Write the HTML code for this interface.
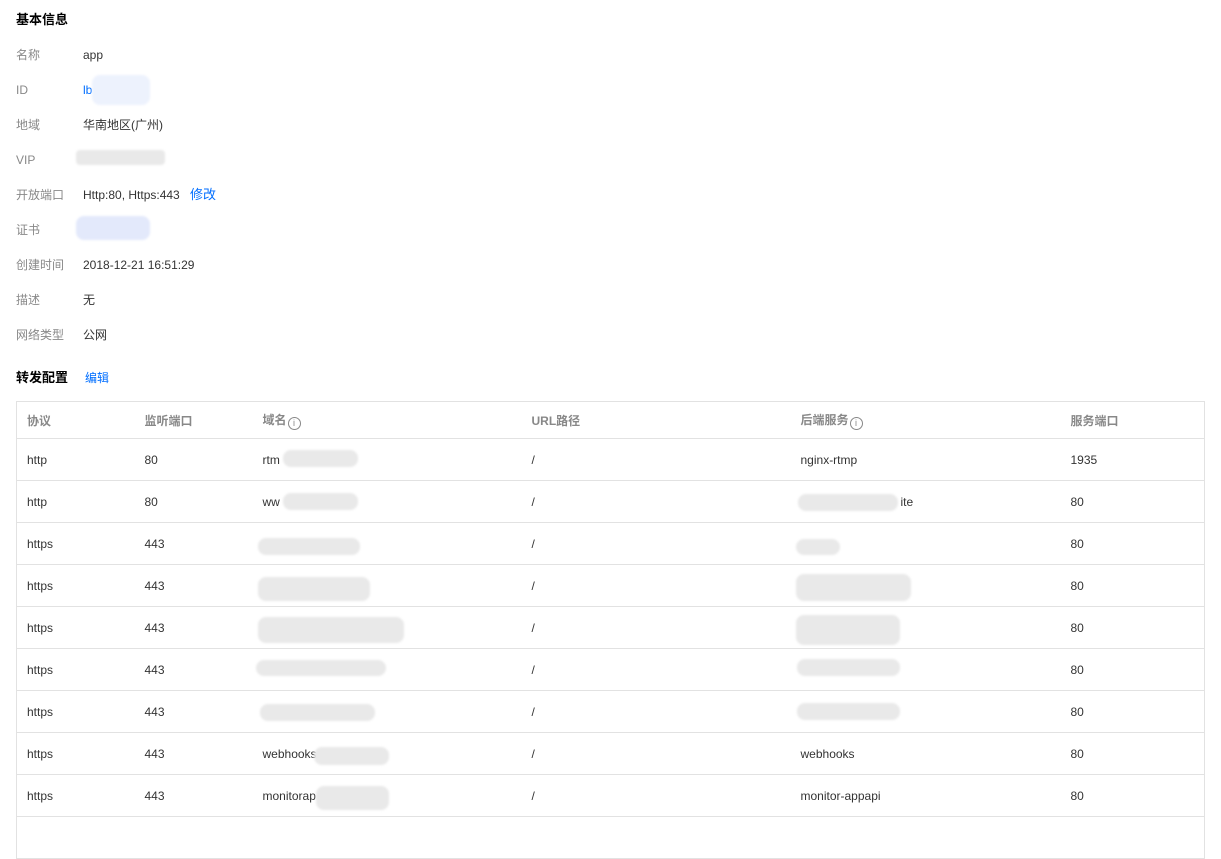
<!DOCTYPE html>
<html><head><meta charset="utf-8"><style>
*{margin:0;padding:0;box-sizing:border-box}
body{width:1221px;height:825px;background:#fff;font-family:"Liberation Sans","Noto Sans CJK SC",sans-serif;font-size:12px;color:#333;position:relative;overflow:hidden}
.a{position:absolute;white-space:nowrap;line-height:14px}
.h{font-weight:bold;color:#000;font-size:13px}
.l{color:#888}
.b{color:#006eff}
.blur{position:absolute;background:#e9e9e9;border-radius:8px;filter:blur(1px)}
.bl{position:absolute;background:#e3e9fb;border-radius:8px;filter:blur(1px)}
table{position:absolute;left:16px;top:401px;width:1189px;border-collapse:collapse;border:1px solid #e2e2e2;border-bottom:none}
td,th{height:42px;text-align:left;font-weight:normal;border-bottom:1px solid #e2e2e2;padding:0 0 0 10px;color:#333;vertical-align:middle}
th{height:37px;color:#888;font-weight:bold}
.i{display:inline-block;width:13px;height:13px;border:1px solid #888;border-radius:50%;font-size:9px;line-height:11px;text-align:center;vertical-align:-2px;font-weight:normal;margin-left:1px}
</style></head><body>
<div class="a h" style="left:16px;top:13px">基本信息</div>
<div class="a l" style="left:16px;top:48px">名称</div><div class="a" style="left:83px;top:48px">app</div>
<div class="a l" style="left:16px;top:83px">ID</div><div class="a b" style="left:83px;top:83px">lb</div><div class="bl" style="left:92px;top:75px;width:58px;height:30px;background:#edf2fd"></div>
<div class="a l" style="left:16px;top:118px">地域</div><div class="a" style="left:83px;top:118px">华南地区(广州)</div>
<div class="a l" style="left:16px;top:153px">VIP</div><div class="blur" style="left:76px;top:150px;width:89px;height:15px;border-radius:4px"></div>
<div class="a l" style="left:16px;top:188px">开放端口</div><div class="a" style="left:83px;top:188px">Http:80, Https:443</div><div class="a b" style="left:190px;top:188px;font-size:13px">修改</div>
<div class="a l" style="left:16px;top:223px">证书</div><div class="bl" style="left:76px;top:216px;width:74px;height:24px"></div>
<div class="a l" style="left:16px;top:258px">创建时间</div><div class="a" style="left:83px;top:258px">2018-12-21 16:51:29</div>
<div class="a l" style="left:16px;top:293px">描述</div><div class="a" style="left:83px;top:293px">无</div>
<div class="a l" style="left:16px;top:328px">网络类型</div><div class="a" style="left:83px;top:328px">公网</div>
<div class="a h" style="left:16px;top:371px">转发配置</div><div class="a b" style="left:85px;top:371px">编辑</div>
<table>
<tr><th style="width:118px">协议</th><th style="width:118px">监听端口</th><th style="width:269px">域名<span class="i">i</span></th><th style="width:269px">URL路径</th><th style="width:270px">后端服务<span class="i">i</span></th><th>服务端口</th></tr>
<tr><td>http</td><td>80</td><td>rtm</td><td>/</td><td>nginx-rtmp</td><td>1935</td></tr>
<tr><td>http</td><td>80</td><td>ww</td><td>/</td><td><span style="padding-left:100px">ite</span></td><td>80</td></tr>
<tr><td>https</td><td>443</td><td></td><td>/</td><td></td><td>80</td></tr>
<tr><td>https</td><td>443</td><td></td><td>/</td><td></td><td>80</td></tr>
<tr><td>https</td><td>443</td><td></td><td>/</td><td></td><td>80</td></tr>
<tr><td>https</td><td>443</td><td></td><td>/</td><td></td><td>80</td></tr>
<tr><td>https</td><td>443</td><td></td><td>/</td><td></td><td>80</td></tr>
<tr><td>https</td><td>443</td><td>webhooks</td><td>/</td><td>webhooks</td><td>80</td></tr>
<tr><td>https</td><td>443</td><td>monitorap</td><td>/</td><td>monitor-appapi</td><td>80</td></tr>
<tr><td></td><td></td><td></td><td></td><td></td><td></td></tr>
</table>
<div class="blur" style="left:283px;top:450px;width:75px;height:17px"></div>
<div class="blur" style="left:283px;top:493px;width:75px;height:17px"></div>
<div class="blur" style="left:258px;top:538px;width:102px;height:17px"></div>
<div class="blur" style="left:258px;top:577px;width:112px;height:24px"></div>
<div class="blur" style="left:258px;top:617px;width:146px;height:26px"></div>
<div class="blur" style="left:256px;top:660px;width:130px;height:16px"></div>
<div class="blur" style="left:260px;top:704px;width:115px;height:17px"></div>
<div class="blur" style="left:314px;top:747px;width:75px;height:18px"></div>
<div class="blur" style="left:316px;top:786px;width:73px;height:24px"></div>
<div class="blur" style="left:798px;top:494px;width:100px;height:17px"></div>
<div class="blur" style="left:796px;top:539px;width:44px;height:16px"></div>
<div class="blur" style="left:796px;top:574px;width:115px;height:27px"></div>
<div class="blur" style="left:796px;top:615px;width:104px;height:30px"></div>
<div class="blur" style="left:797px;top:659px;width:103px;height:17px"></div>
<div class="blur" style="left:797px;top:703px;width:103px;height:17px"></div>
</body></html>
